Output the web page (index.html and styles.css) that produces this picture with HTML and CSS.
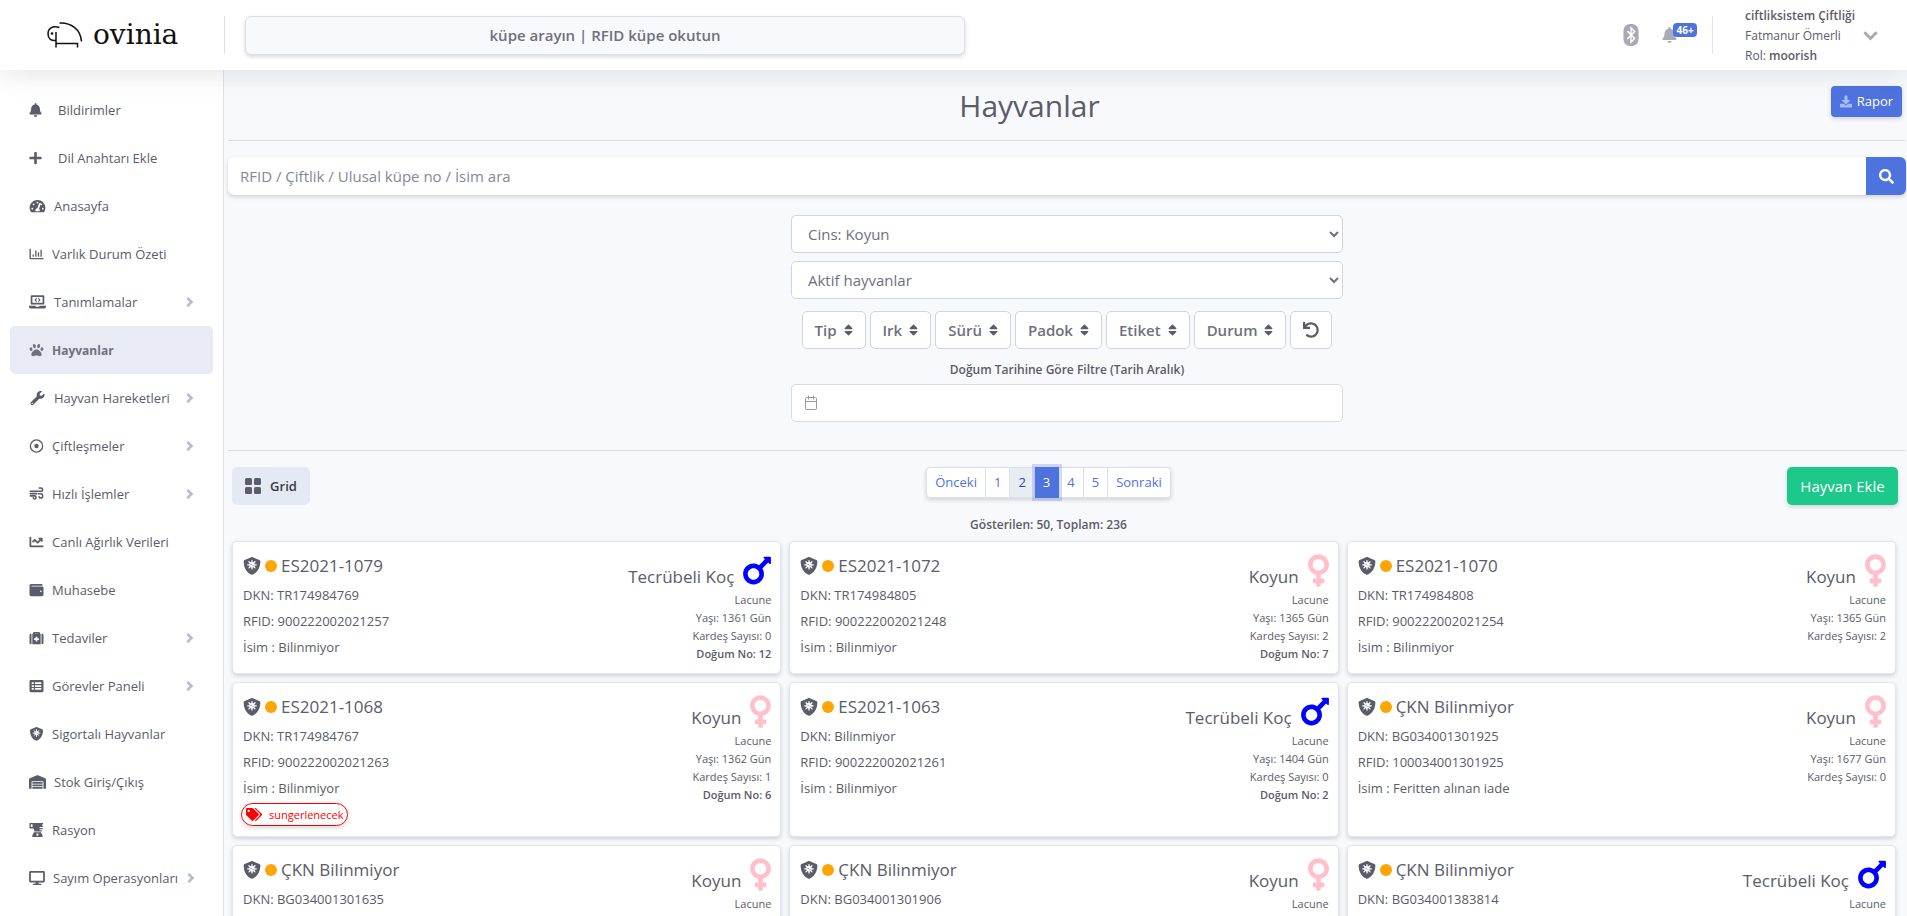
FILE: index.html
```html
<!DOCTYPE html>
<html lang="tr">
<head>
<meta charset="utf-8">
<title>Hayvanlar - ovinia</title>
<link rel="stylesheet" href="styles.css">
</head>
<body>
<svg class="sprite" aria-hidden="true">
  <symbol id="bell" viewBox="0 0 448 512"><path d="M224 512c35.32 0 63.97-28.65 63.97-64H160.03c0 35.35 28.65 64 63.97 64zm215.39-149.71c-19.32-20.76-55.47-51.99-55.47-154.29 0-77.7-54.48-139.9-127.94-155.16V32c0-17.67-14.32-32-31.98-32s-31.98 14.33-31.98 32v20.84C118.56 68.1 64.08 130.3 64.08 208c0 102.3-36.15 133.53-55.47 154.29-6 6.45-8.66 14.16-8.61 21.71.11 16.4 12.98 32 32.1 32h383.8c19.12 0 32-15.6 32.1-32 .05-7.55-2.61-15.27-8.61-21.71z"/></symbol>
  <symbol id="plus" viewBox="0 0 448 512"><path d="M416 208H272V64c0-17.67-14.33-32-32-32h-32c-17.67 0-32 14.33-32 32v144H32c-17.67 0-32 14.33-32 32v32c0 17.67 14.33 32 32 32h144v144c0 17.67 14.33 32 32 32h32c17.67 0 32-14.33 32-32V304h144c17.67 0 32-14.33 32-32v-32c0-17.67-14.33-32-32-32z"/></symbol>
  <symbol id="gauge" viewBox="0 0 576 512"><path fill-rule="evenodd" d="M288 32C129 32 0 161 0 320c0 53 14 102 39 145 6 10 16 15 27 15h444c11 0 21-5 27-15 25-43 39-92 39-145C576 161 447 32 288 32zm0 64a32 32 0 1 1 0 64 32 32 0 0 1 0-64zM96 384a32 32 0 1 1 0-64 32 32 0 0 1 0 64zm48-160a32 32 0 1 1 0-64 32 32 0 0 1 0 64zm247-78c13 4 20 18 15 31l-61 184c14 12 23 29 23 55 0 12-3 22-9 32H217c-6-10-9-20-9-32 0-42 34-78 76-80l61-174c5-13 18-20 46-16zM432 224a32 32 0 1 1 0-64 32 32 0 0 1 0 64zm48 160a32 32 0 1 1 0-64 32 32 0 0 1 0 64z"/></symbol>
  <symbol id="bars" viewBox="0 0 512 512"><path d="M24 64h16c6 0 10 4 10 10v326h452c6 0 10 4 10 10v28c0 6-4 10-10 10H24c-13 0-24-11-24-24V74c0-6 4-10 10-10zM112 272h48v80h-48zM208 128h48v224h-48zM304 192h48v160h-48zM400 96h48v256h-48z"/></symbol>
  <symbol id="laptop" viewBox="0 0 640 512"><path fill-rule="evenodd" d="M112 0h416c27 0 48 21 48 48v304H64V48C64 21 85 0 112 0zm16 64v224h384V64zM0 400h240c1 18 14 32 32 32h96c18 0 31-14 32-32h240v32c0 35-29 64-64 64H64c-35 0-64-29-64-64z"/><path d="M278 100l28 28-48 48 48 48-28 28-76-76zM362 100l-28 28 48 48-48 48 28 28 76-76z"/></symbol>
  <symbol id="paw" viewBox="0 0 512 512"><path d="M256 224c-79.41 0-192 122.76-192 200.25 0 34.9 26.81 55.75 71.74 55.75 48.84 0 81.09-25.08 120.26-25.08 39.51 0 71.85 25.08 120.26 25.08 44.93 0 71.74-20.85 71.74-55.75C448 346.76 335.41 224 256 224z"/><ellipse cx="56" cy="224" rx="52" ry="66" transform="rotate(-17 56 224)"/><ellipse cx="178" cy="112" rx="54" ry="78" transform="rotate(-15 178 112)"/><ellipse cx="334" cy="112" rx="54" ry="78" transform="rotate(15 334 112)"/><ellipse cx="456" cy="224" rx="52" ry="66" transform="rotate(17 456 224)"/></symbol>
  <symbol id="wrench" viewBox="0 0 512 512"><path d="M507.73 109.1c-2.24-9.03-13.54-12.09-20.12-5.51l-74.36 74.36-67.88-11.31-11.31-67.88 74.36-74.36c6.62-6.62 3.43-17.9-5.66-20.16-47.38-11.74-99.55.91-136.58 37.93-39.64 39.64-50.55 97.1-34.05 147.2L18.74 402.76c-24.99 24.99-24.99 65.51 0 90.5 24.99 24.99 65.51 24.99 90.5 0l213.21-213.21c50.12 16.71 107.47 5.68 147.37-34.22 37.07-37.07 49.7-89.32 37.91-136.73zM64 472c-13.25 0-24-10.75-24-24 0-13.26 10.75-24 24-24s24 10.74 24 24c0 13.25-10.75 24-24 24z"/></symbol>
  <symbol id="target" viewBox="0 0 512 512"><circle cx="256" cy="256" r="224" fill="none" stroke="currentColor" stroke-width="48"/><circle cx="256" cy="256" r="80"/></symbol>
  <symbol id="wind" viewBox="0 0 512 512"><path fill="none" stroke="currentColor" stroke-width="56" stroke-linecap="round" d="M28 156h380c40 0 72-24 72-60s-30-60-62-60h-62M28 242h240M28 324h160c34 0 52 24 52 56s-26 56-52 56-46-16-52-40M330 250h78c40 0 74 32 74 78s-32 76-70 76c-34 0-54-20-60-46"/></symbol>
  <symbol id="trend" viewBox="0 0 512 512"><path d="M64 384h432c9 0 16 7 16 16v32c0 9-7 16-16 16H32c-18 0-32-14-32-32V80c0-9 7-16 16-16h32c9 0 16 7 16 16zM368 96h96c9 0 16 7 16 16v118c0 21-26 32-41 17l-32-32-90 90c-12 13-33 13-45 0l-80-80-60 60-46-45 84-84c12-12 33-12 45 0l80 80 67-67-33-32c-15-15-4-41 39-41z"/></symbol>
  <symbol id="wallet" viewBox="0 0 512 512"><path d="M461.2 128H80c-8.84 0-16-7.16-16-16s7.16-16 16-16h384c8.84 0 16-7.16 16-16 0-26.51-21.49-48-48-48H64C28.65 32 0 60.65 0 96v320c0 35.35 28.65 64 64 64h397.2c28.02 0 50.8-21.53 50.8-48V176c0-26.47-22.78-48-50.8-48zM416 336c-17.67 0-32-14.33-32-32s14.33-32 32-32 32 14.33 32 32-14.33 32-32 32z"/></symbol>
  <symbol id="medkit" viewBox="0 0 512 512"><path d="M0 144v288c0 26 22 48 48 48h24V96H48c-26 0-48 22-48 48zM464 96h-24v384h24c26 0 48-22 48-48V144c0-26-22-48-48-48z"/><path fill-rule="evenodd" d="M384 96V80c0-26-21-48-48-48H176c-27 0-48 22-48 48v16h-24v384h304V96zM184 88h144v8H184zm40 120h64v56h56v64h-56v56h-64v-56h-56v-64h56z"/></symbol>
  <symbol id="list" viewBox="0 0 512 512"><path fill-rule="evenodd" d="M48 32h416c27 0 48 22 48 48v352c0 26-21 48-48 48H48c-27 0-48-22-48-48V80c0-26 21-48 48-48zm32 88v64h80v-64zm120 0v64h232v-64zM80 224v64h80v-64zm120 0v64h232v-64zM80 328v64h80v-64zm120 0v64h232v-64z"/></symbol>
  <symbol id="shield" viewBox="0 0 512 512"><path d="M256 0c9 0 16 2 24 5l184 77c18 7 30 25 30 44 0 200-112 325-214 372-16 7-32 7-48 0C113 447 18 309 18 126c0-19 12-37 30-44L232 5c8-3 15-5 24-5z"/><g class="cut"><circle cx="256" cy="222" r="78"/><path d="M256 100v244M134 222h244M170 136l172 172M342 136L170 308" stroke-width="36" stroke-linecap="round"/></g><circle cx="230" cy="204" r="15"/><circle cx="286" cy="242" r="13"/></symbol>
  <symbol id="warehouse" viewBox="0 0 640 512"><path d="M504 352H136.4c-4.4 0-8 3.6-8 8l-.1 48c0 4.4 3.6 8 8 8H504c4.4 0 8-3.6 8-8v-48c0-4.4-3.6-8-8-8zm0 96H136.1c-4.4 0-8 3.6-8 8l-.1 48c0 4.4 3.6 8 8 8h368c4.4 0 8-3.6 8-8v-48c0-4.4-3.6-8-8-8zm0-192H136.6c-4.4 0-8 3.6-8 8l-.1 48c0 4.4 3.6 8 8 8H504c4.4 0 8-3.6 8-8v-48c0-4.4-3.6-8-8-8zm106.5-139L338.4 3.7a48.15 48.15 0 0 0-36.9 0L29.5 117C11.7 124.5 0 141.9 0 161.3V504c0 4.4 3.6 8 8 8h80c4.4 0 8-3.6 8-8V256c0-17.6 14.6-32 32.6-32h382.8c18 0 32.6 14.4 32.6 32v248c0 4.4 3.6 8 8 8h80c4.4 0 8-3.6 8-8V161.3c0-19.4-11.7-36.8-29.5-44.3z"/></symbol>
  <symbol id="ration" viewBox="0 0 512 512"><path fill-rule="evenodd" d="M16 0h480v48h-32v48h32v48H368v36h112v48H368v36h80v48H176v-48l-32-64H16C6 200 0 194 0 184V16C0 6 6 0 16 0zm32 48v96h64V48zM160 336h260l60 130v46H100v-46zm130 50a40 40 0 1 0 0 80 40 40 0 0 0 0-80z"/></symbol>
  <symbol id="monitor" viewBox="0 0 576 512"><path fill-rule="evenodd" d="M48 0h480c27 0 48 21 48 48v320c0 27-21 48-48 48H336l16 48h72c13 0 24 11 24 24s-11 24-24 24H152c-13 0-24-11-24-24s11-24 24-24h72l16-48H48c-27 0-48-21-48-48V48C0 21 21 0 48 0zm16 64v288h448V64z"/></symbol>
  <symbol id="chevron" viewBox="0 0 320 512"><path d="M70 80l176 176L70 432" fill="none" stroke="currentColor" stroke-width="108"/></symbol>
  <symbol id="chevron-down" viewBox="0 0 448 512"><path d="M40 160l184 184 184-184" fill="none" stroke="currentColor" stroke-width="88"/></symbol>
  <symbol id="bluetooth" viewBox="0 0 352 512"><path d="M176 0C60 0 0 62 0 176v160c0 114 60 176 176 176s176-62 176-176V176C352 62 292 0 176 0z"/><path d="M92 166l168 172-84 82V92l84 82L92 346" fill="none" stroke="#fff" stroke-width="34"/></symbol>
  <symbol id="search" viewBox="0 0 512 512"><path d="M505 442.7L405.3 343c-4.5-4.5-10.600-7-17-7H372c27.600-35.300 44-79.700 44-128C416 93.100 322.900 0 208 0S0 93.100 0 208s93.100 208 208 208c48.300 0 92.700-16.400 128-44v16.300c0 6.400 2.500 12.500 7 17l99.700 99.700c9.400 9.400 24.600 9.400 33.900 0l28.300-28.300c9.400-9.400 9.400-24.600.1-34zM208 336c-70.700 0-128-57.200-128-128 0-70.700 57.200-128 128-128 70.700 0 128 57.200 128 128 0 70.700-57.200 128-128 128z"/></symbol>
  <symbol id="download" viewBox="0 0 512 512"><path d="M216 0h80c13.300 0 24 10.700 24 24v168h87.700c17.800 0 26.700 21.500 14.100 34.100L269.700 378.300c-7.500 7.500-19.800 7.500-27.300 0L90.100 226.100c-12.600-12.600-3.700-34.100 14.100-34.100H192V24c0-13.300 10.700-24 24-24zm296 376v112c0 13.300-10.700 24-24 24H24c-13.300 0-24-10.700-24-24V376c0-13.300 10.700-24 24-24h146.700l49 49c20.100 20.100 52.500 20.100 72.600 0l49-49H488c13.300 0 24 10.700 24 24z"/></symbol>
  <symbol id="sort" viewBox="0 0 320 512"><path d="M41 288h238c21.400 0 32.100 25.900 17 41L177 448c-9.400 9.400-24.600 9.400-33.900 0L24 329c-15.100-15.100-4.400-41 17-41zm255-105L177 64c-9.400-9.400-24.600-9.400-33.900 0L24 183c-15.100 15.100-4.400 41 17 41h238c21.400 0 32.100-25.900 17-41z"/></symbol>
  <symbol id="undo" viewBox="0 0 512 512"><path d="M212.333 224.333H12c-6.627 0-12-5.373-12-12V12C0 5.373 5.373 0 12 0h48c6.627 0 12 5.373 12 12v78.112C117.773 39.279 184.260 7.470 258.175 8.007c136.906.994 246.448 111.623 246.157 248.532C504.041 393.258 393.120 504 256.333 504c-64.089 0-122.496-24.313-166.510-64.215-5.099-4.622-5.334-12.554-.467-17.420l33.967-33.967c4.474-4.474 11.662-4.717 16.401-.525C170.760 415.336 211.580 432 256.333 432c97.268 0 176-78.716 176-176 0-97.267-78.716-176-176-176-58.496 0-110.280 28.476-142.274 72.333h98.274c6.627 0 12 5.373 12 12v48c0 6.627-5.373 12-12 12z"/></symbol>
  <symbol id="calendar" viewBox="0 0 14 16"><path d="M1.500 3.500Q1.500 2.500 2.500 2.500h9Q12.500 2.500 12.500 3.500v10q0 1-1 1h-9q-1 0-1-1zM1.500 6.500h11M4.500 .5v4M9.500 .5v4" fill="none" stroke="currentColor"/></symbol>
  <symbol id="grid" viewBox="0 0 16 16"><rect width="7" height="7" rx="1.500"/><rect x="9" width="7" height="7" rx="1.500"/><rect y="9" width="7" height="7" rx="1.500"/><rect x="9" y="9" width="7" height="7" rx="1.500"/></symbol>
  <symbol id="tags" viewBox="0 0 640 512"><path d="M497.941 225.941L286.059 14.059A48 48 0 0 0 252.118 0H48C21.490 0 0 21.490 0 48v204.118a48 48 0 0 0 14.059 33.941l211.882 211.882c18.744 18.745 49.136 18.746 67.882 0l204.118-204.118c18.745-18.745 18.745-49.137 0-67.882zM112 160c-26.510 0-48-21.490-48-48s21.490-48 48-48 48 21.490 48 48-21.490 48-48 48zm513.941 133.823L421.823 497.941c-18.745 18.745-49.137 18.745-67.882 0l-.36-.36L527.640 323.522c16.999-16.999 26.360-39.600 26.360-63.640s-9.362-46.641-26.360-63.640L331.397 0h48.721a48 48 0 0 1 33.941 14.059l211.882 211.882c18.745 18.745 18.745 49.137 0 67.882z"/></symbol>
  <symbol id="venus" viewBox="0 0 288 512"><path d="M288 176c0-79.500-64.500-144-144-144S0 96.500 0 176c0 68.500 47.900 125.900 112 140.400V368H76c-6.600 0-12 5.400-12 12v40c0 6.600 5.400 12 12 12h36v36c0 6.600 5.400 12 12 12h40c6.600 0 12-5.400 12-12v-36h36c6.600 0 12-5.400 12-12v-40c0-6.600-5.400-12-12-12h-36v-51.600c64.100-14.600 112-71.900 112-140.400zm-224 0c0-44.100 35.900-80 80-80s80 35.900 80 80-35.900 80-80 80-80-35.900-80-80z"/></symbol>
  <symbol id="mars" viewBox="0 0 384 512"><path d="M372 64h-79c-10.700 0-16 12.900-8.500 20.500l16.900 16.900-80.700 80.700C198.500 167.900 172.200 160 144 160 64.500 160 0 224.500 0 304s64.500 144 144 144 144-64.500 144-144c0-28.200-7.900-54.500-21.800-76.700l80.700-80.700 16.900 16.900c7.600 7.600 20.500 2.200 20.500-8.500V76c.1-6.600-5.300-12-11.900-12zM144 384c-44.100 0-80-35.900-80-80s35.900-80 80-80 80 35.900 80 80-35.900 80-80 80z"/></symbol>
</svg>

<div class="app">
  <header class="topbar">
    <a class="brand" href="#">
      <svg class="brand-mark" viewBox="0 0 36 28"><path d="M12.500 2C24 1.500 33.500 8 34.500 20.500M12.500 6.500C5 4 1 8 1 13c0 5 3.500 7 8 6.500M9 11v15.500M9 22.500h21.500v4" fill="none" stroke="#111" stroke-width="1.500"/><circle cx="5" cy="12.500" r="1.300"/></svg>
      <span>ovinia</span>
    </a>
    <input class="quick" type="text" aria-label="Küpe arama" placeholder="küpe arayın | RFID küpe okutun">
    <div class="top-tools">
      <button class="tool" aria-label="Bluetooth"><svg class="bt"><use href="#bluetooth"/></svg></button>
      <button class="tool alerts" aria-label="Bildirimler"><svg class="alert-bell"><use href="#bell"/></svg><span class="badge">46+</span></button>
      <button class="profile">
        <span class="who"><b>ciftliksistem Çiftliği</b><span>Fatmanur Ömerli</span><span>Rol: <b>moorish</b></span></span>
        <svg class="down"><use href="#chevron-down"/></svg>
      </button>
    </div>
  </header>

  <div class="body">
    <nav class="side">
      <a class="item far" href="#"><svg class="i12"><use href="#bell"/></svg>Bildirimler</a>
      <a class="item far" href="#"><svg class="i12"><use href="#plus"/></svg>Dil Anahtarı Ekle</a>
      <a class="item" href="#"><svg class="i17"><use href="#gauge"/></svg>Anasayfa</a>
      <a class="item" href="#"><svg><use href="#bars"/></svg>Varlık Durum Özeti</a>
      <a class="item" href="#"><svg class="i17"><use href="#laptop"/></svg>Tanımlamalar<svg class="more"><use href="#chevron"/></svg></a>
      <a class="item active" href="#"><svg><use href="#paw"/></svg>Hayvanlar</a>
      <a class="item" href="#"><svg class="i17"><use href="#wrench"/></svg>Hayvan Hareketleri<svg class="more"><use href="#chevron"/></svg></a>
      <a class="item" href="#"><svg><use href="#target"/></svg>Çiftleşmeler<svg class="more"><use href="#chevron"/></svg></a>
      <a class="item" href="#"><svg><use href="#wind"/></svg>Hızlı İşlemler<svg class="more"><use href="#chevron"/></svg></a>
      <a class="item" href="#"><svg><use href="#trend"/></svg>Canlı Ağırlık Verileri</a>
      <a class="item" href="#"><svg><use href="#wallet"/></svg>Muhasebe</a>
      <a class="item" href="#"><svg><use href="#medkit"/></svg>Tedaviler<svg class="more"><use href="#chevron"/></svg></a>
      <a class="item" href="#"><svg><use href="#list"/></svg>Görevler Paneli<svg class="more"><use href="#chevron"/></svg></a>
      <a class="item" href="#"><svg><use href="#shield"/></svg>Sigortalı Hayvanlar</a>
      <a class="item" href="#"><svg class="i17"><use href="#warehouse"/></svg>Stok Giriş/Çıkış</a>
      <a class="item" href="#"><svg><use href="#ration"/></svg>Rasyon</a>
      <a class="item" href="#"><svg class="i16"><use href="#monitor"/></svg>Sayım Operasyonları<svg class="more"><use href="#chevron"/></svg></a>
    </nav>

    <main class="main">
      <div class="head">
        <h1>Hayvanlar</h1>
        <button class="report"><svg><use href="#download"/></svg>Rapor</button>
      </div>

      <form class="search">
        <input type="text" aria-label="Hayvan ara" placeholder="RFID / Çiftlik / Ulusal küpe no / İsim ara">
        <button type="button" aria-label="Ara"><svg><use href="#search"/></svg></button>
      </form>

      <section class="filters">
        <select aria-label="Cins"><option>Cins: Koyun</option></select>
        <select aria-label="Durum"><option>Aktif hayvanlar</option></select>
        <div class="chips">
          <button>Tip<svg><use href="#sort"/></svg></button>
          <button>Irk<svg><use href="#sort"/></svg></button>
          <button>Sürü<svg><use href="#sort"/></svg></button>
          <button>Padok<svg><use href="#sort"/></svg></button>
          <button>Etiket<svg><use href="#sort"/></svg></button>
          <button>Durum<svg><use href="#sort"/></svg></button>
          <button class="reset" aria-label="Sıfırla"><svg><use href="#undo"/></svg></button>
        </div>
        <label for="born">Doğum Tarihine Göre Filtre (Tarih Aralık)</label>
        <div class="date"><svg><use href="#calendar"/></svg><input id="born" type="text"></div>
      </section>

      <div class="listbar">
        <button class="view"><svg><use href="#grid"/></svg>Grid</button>
        <div class="pager">
          <div class="pages">
            <a href="#">Önceki</a><a href="#">1</a><a class="hover" href="#">2</a><a class="current" href="#">3</a><a href="#">4</a><a href="#">5</a><a href="#">Sonraki</a>
          </div>
          <p>Gösterilen: 50, Toplam: 236</p>
        </div>
        <button class="add">Hayvan Ekle</button>
      </div>

      <section class="cards">
        <article class="card">
          <div class="info"><h2><svg><use href="#shield"/></svg><i class="dot"></i>ES2021-1079</h2><p>DKN: TR174984769</p><p>RFID: 900222002021257</p><p>İsim : Bilinmiyor</p></div>
          <div class="meta"><div class="kind">Tecrübeli Koç<svg class="mars"><use href="#mars"/></svg></div><p>Lacune</p><p>Yaşı: 1361 Gün</p><p>Kardeş Sayısı: 0</p><p><b>Doğum No: 12</b></p></div>
        </article>
        <article class="card">
          <div class="info"><h2><svg><use href="#shield"/></svg><i class="dot"></i>ES2021-1072</h2><p>DKN: TR174984805</p><p>RFID: 900222002021248</p><p>İsim : Bilinmiyor</p></div>
          <div class="meta"><div class="kind">Koyun<svg class="venus"><use href="#venus"/></svg></div><p>Lacune</p><p>Yaşı: 1365 Gün</p><p>Kardeş Sayısı: 2</p><p><b>Doğum No: 7</b></p></div>
        </article>
        <article class="card">
          <div class="info"><h2><svg><use href="#shield"/></svg><i class="dot"></i>ES2021-1070</h2><p>DKN: TR174984808</p><p>RFID: 900222002021254</p><p>İsim : Bilinmiyor</p></div>
          <div class="meta"><div class="kind">Koyun<svg class="venus"><use href="#venus"/></svg></div><p>Lacune</p><p>Yaşı: 1365 Gün</p><p>Kardeş Sayısı: 2</p></div>
        </article>
        <article class="card">
          <div class="info"><h2><svg><use href="#shield"/></svg><i class="dot"></i>ES2021-1068</h2><p>DKN: TR174984767</p><p>RFID: 900222002021263</p><p>İsim : Bilinmiyor</p><span class="tag"><svg><use href="#tags"/></svg>sungerlenecek</span></div>
          <div class="meta"><div class="kind">Koyun<svg class="venus"><use href="#venus"/></svg></div><p>Lacune</p><p>Yaşı: 1362 Gün</p><p>Kardeş Sayısı: 1</p><p><b>Doğum No: 6</b></p></div>
        </article>
        <article class="card">
          <div class="info"><h2><svg><use href="#shield"/></svg><i class="dot"></i>ES2021-1063</h2><p>DKN: Bilinmiyor</p><p>RFID: 900222002021261</p><p>İsim : Bilinmiyor</p></div>
          <div class="meta"><div class="kind">Tecrübeli Koç<svg class="mars"><use href="#mars"/></svg></div><p>Lacune</p><p>Yaşı: 1404 Gün</p><p>Kardeş Sayısı: 0</p><p><b>Doğum No: 2</b></p></div>
        </article>
        <article class="card">
          <div class="info"><h2><svg><use href="#shield"/></svg><i class="dot"></i>ÇKN Bilinmiyor</h2><p>DKN: BG034001301925</p><p>RFID: 100034001301925</p><p>İsim : Feritten alınan iade</p></div>
          <div class="meta"><div class="kind">Koyun<svg class="venus"><use href="#venus"/></svg></div><p>Lacune</p><p>Yaşı: 1677 Gün</p><p>Kardeş Sayısı: 0</p></div>
        </article>
        <article class="card">
          <div class="info"><h2><svg><use href="#shield"/></svg><i class="dot"></i>ÇKN Bilinmiyor</h2><p>DKN: BG034001301635</p></div>
          <div class="meta"><div class="kind">Koyun<svg class="venus"><use href="#venus"/></svg></div><p>Lacune</p></div>
        </article>
        <article class="card">
          <div class="info"><h2><svg><use href="#shield"/></svg><i class="dot"></i>ÇKN Bilinmiyor</h2><p>DKN: BG034001301906</p></div>
          <div class="meta"><div class="kind">Koyun<svg class="venus"><use href="#venus"/></svg></div><p>Lacune</p></div>
        </article>
        <article class="card">
          <div class="info"><h2><svg><use href="#shield"/></svg><i class="dot"></i>ÇKN Bilinmiyor</h2><p>DKN: BG034001383814</p></div>
          <div class="meta"><div class="kind">Tecrübeli Koç<svg class="mars"><use href="#mars"/></svg></div><p>Lacune</p></div>
        </article>
      </section>
    </main>
  </div>
</div>
</body>
</html>
```

FILE: styles.css
```css
* { box-sizing: border-box; }
body {
  margin: 0;
  font-family: "Segoe UI", "Open Sans", "Noto Sans", sans-serif;
  font-size: 13px;
  color: #5a5c69;
  background: #f8f9fc;
}
h1, h2, p { margin: 0; font-weight: 400; }
b { font-weight: 600; }
a { color: inherit; text-decoration: none; }
button, input, select { font: inherit; color: inherit; }
button { cursor: pointer; border: 0; background: none; padding: 0; }
svg { fill: currentColor; flex: none; }
.sprite { position: absolute; width: 0; height: 0; }
.cut { fill: #fff; stroke: #fff; }

.app { display: flex; flex-direction: column; height: 100vh; }

/* top bar */
.topbar {
  display: flex;
  align-items: center;
  height: 70px;
  flex: none;
  background: #fff;
  box-shadow: 0 2px 28px rgba(58, 59, 69, .15);
  z-index: 2;
}
.brand {
  display: flex;
  align-items: center;
  gap: 10px;
  width: 225px;
  height: 38px;
  padding-left: 47px;
  border-right: 1px solid #dddfeb;
  font-family: "DejaVu Serif", serif;
  font-size: 28px;
  line-height: 38px;
  color: #111;
}
.brand-mark { width: 36px; height: 28px; }
.quick {
  width: 720px;
  height: 39px;
  margin-left: 20px;
  border: 1px solid #dedee2;
  border-radius: 6px;
  background: #f8f9fc;
  box-shadow: 0 2px 4px rgba(0, 0, 0, .15);
  font-size: 15px;
  font-weight: 600;
  text-align: center;
}
.quick::placeholder { color: #6e707e; opacity: 1; }
.top-tools { display: flex; align-items: center; margin-left: auto; padding-right: 29px; }
.tool { display: flex; color: #a9a9b7; }
.bt { width: 16px; height: 22px; }
.alerts { position: relative; margin-left: 23px; }
.alert-bell { width: 15px; height: 16px; }
.badge {
  position: absolute;
  left: 11px;
  top: -4px;
  width: 24px;
  border-radius: 4px;
  background: #4e73df;
  color: #fff;
  font-size: 10px;
  font-weight: 700;
  line-height: 14px;
}
.profile {
  display: flex;
  align-items: center;
  gap: 8px;
  height: 38px;
  margin-left: 35px;
  padding-left: 32px;
  border-left: 1px solid #e3e6f0;
  font-size: 12px;
  line-height: 20px;
  text-align: left;
}
.who { display: flex; flex-direction: column; padding-top: 2px; }
.down { width: 15px; height: 17px; color: #a9a9b7; }

.body { display: flex; flex: 1; min-height: 0; }

/* side navigation */
.side {
  width: 224px;
  flex: none;
  padding: 16px 10px;
  overflow: hidden;
  background: #fff;
  border-right: 1px solid #dfe2ef;
}
.item {
  display: flex;
  align-items: center;
  gap: 8px;
  height: 48px;
  padding: 0 19px;
  border-radius: 5px;
  font-size: 13px;
  white-space: nowrap;
}
.item svg { width: 15px; height: 14px; }
.item .i12 { width: 13px; }
.item .i16 { width: 16px; }
.item .i17 { width: 17px; }
.item.far { gap: 16px; }
.item .more { width: 9px; height: 12px; margin-left: auto; color: #b7b9cc; }
.item.active { background: #e8ebf4; color: #6e707e; font-size: 12px; font-weight: 700; }

/* content */
.main { flex: 1; min-width: 0; padding: 0 1px 0 4px; overflow-y: auto; scrollbar-width: none; }
.head {
  display: flex;
  align-items: center;
  height: 71px;
  padding-right: 4px;
  border-bottom: 1px solid #dcdee6;
}
.head h1 { flex: 1; padding-top: 2px; font-size: 30px; line-height: 40px; text-align: center; }
.report {
  display: flex;
  align-items: center;
  justify-content: center;
  gap: 5px;
  width: 71px;
  height: 31px;
  margin-bottom: 8px;
  border-radius: 4px;
  background: #4e73df;
  color: #fff;
  box-shadow: 0 2px 4px rgba(58, 59, 69, .2);
}
.report svg { width: 12px; height: 13px; opacity: .5; }
.search {
  display: flex;
  height: 38px;
  margin-top: 16px;
  border-radius: 6px;
  overflow: hidden;
  background: #fff;
  box-shadow: 0 2px 4px rgba(58, 59, 69, .2);
}
.search input { flex: 1; border: 0; padding: 0 12px; font-size: 15px; background: none; }
.search input::placeholder { color: #858796; opacity: 1; }
.search button { display: flex; align-items: center; justify-content: center; width: 40px; background: #4e73df; color: #fff; }
.search svg { width: 15px; height: 15px; }

.filters {
  display: flex;
  flex-direction: column;
  align-items: center;
  margin-top: 20px;
  padding-bottom: 28px;
  border-bottom: 1px solid #dcdee6;
}
.filters select, .date {
  width: 33%;
  max-width: 552px;
  height: 38px;
  border: 1px solid #d1d3e2;
  border-radius: 5px;
  background: #fff;
}
.filters select { margin-bottom: 8px; padding: 0 0 0 12px; font-size: 15px; color: #6e707e; }
.chips { display: flex; gap: 4px; margin-top: 4px; }
.chips button {
  display: flex;
  align-items: center;
  gap: 7px;
  height: 38px;
  padding: 0 12px;
  border: 1px solid #d1d3e2;
  border-radius: 5px;
  background: #fff;
  color: #6e707e;
  font-size: 15px;
  font-weight: 600;
}
.chips svg { width: 9px; height: 14px; color: #5a5c69; }
.chips .reset svg { width: 16px; height: 16px; }
.filters label { margin: 12px 0 5px; font-size: 12px; font-weight: 600; line-height: 18px; }
.date { display: flex; align-items: center; padding-left: 12px; border-color: #d9dbdf; }
.date svg { width: 14px; height: 16px; color: #999; }
.date input { flex: 1; border: 0; background: none; }

.listbar { display: flex; align-items: flex-start; justify-content: space-between; padding: 16px 8px 0 4px; }
.view, .add { display: flex; align-items: center; justify-content: center; height: 38px; border-radius: 5px; }
.view { gap: 9px; width: 78px; background: #e5e9f4; color: #3a3b45; font-weight: 600; }
.view svg { width: 16px; height: 16px; color: #5a5c69; }
.add { width: 111px; background: #1cc88a; color: #fff; font-size: 15px; box-shadow: 0 2px 4px rgba(58, 59, 69, .2); }
.pager { display: flex; flex-direction: column; align-items: center; gap: 18px; }
.pages { display: flex; border-radius: 4px; box-shadow: 0 2px 4px rgba(58, 59, 69, .2); color: #4e73df; }
.pages a { padding: 0 8px; border: 1px solid #dddfeb; border-left-width: 0; background: #fff; line-height: 29px; }
.pages a:first-child { border-left-width: 1px; border-radius: 4px 0 0 4px; }
.pages a:last-child { border-radius: 0 4px 4px 0; }
.pages .hover { background: #eaecf4; color: #224abe; }
.pages .current { background: #4e73df; border-color: #4e73df; color: #fff; box-shadow: 0 0 0 3px rgba(78, 115, 223, .25); z-index: 1; }
.pager p { font-size: 12px; font-weight: 600; line-height: 18px; }

/* animal cards */
.cards { display: grid; grid-template-columns: repeat(3, 1fr); gap: 8px; padding: 7px 10px 16px 4px; }
.card {
  display: flex;
  justify-content: space-between;
  min-height: 133px;
  padding: 10px 9px 10px 10px;
  border: 1px solid #e3e6f0;
  border-radius: 5px;
  background: #fff;
  box-shadow: 0 2px 4px rgba(58, 59, 69, .2);
}
.info p { line-height: 26px; }
.info h2 { display: flex; align-items: center; gap: 4px; height: 27px; margin-bottom: 3px; font-size: 17px; }
.info h2 svg { width: 18px; height: 18px; }
.dot { width: 12px; height: 12px; border-radius: 50%; background: orange; }
.tag {
  display: flex;
  align-items: center;
  gap: 7px;
  height: 23px;
  width: max-content;
  margin: 2px 0 0 -2px;
  padding: 0 4px;
  border: 1px solid red;
  border-radius: 12px;
  box-shadow: 0 2px 4px rgba(58, 59, 69, .2);
  color: red;
  font-size: 11px;
}
.tag svg { width: 16px; height: 13px; }
.meta { text-align: right; font-size: 11px; line-height: 18px; }
.kind { display: flex; justify-content: flex-end; gap: 9px; height: 39px; font-size: 17px; line-height: 50px; }
.kind svg { height: 37px; }
.mars { width: 28px; color: blue; }
.venus { width: 21px; color: pink; }
```
